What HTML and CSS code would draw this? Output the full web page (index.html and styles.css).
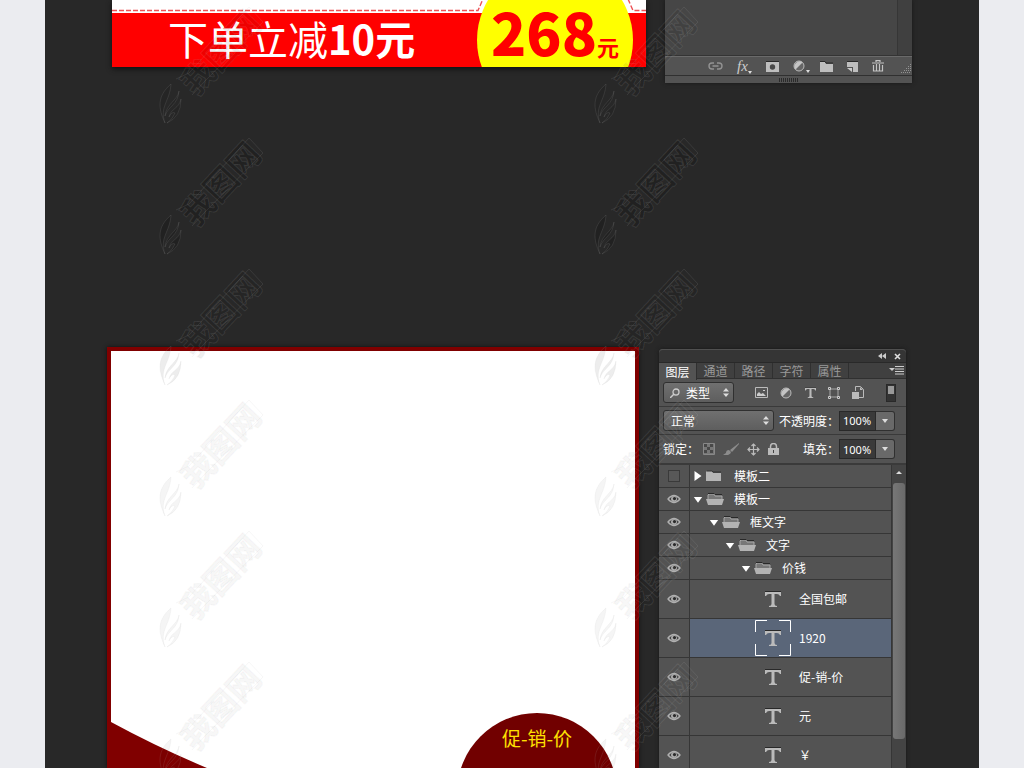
FILE: index.html
```html
<!DOCTYPE html>
<html lang="zh-CN">
<head>
<meta charset="utf-8">
<title>模板预览</title>
<link rel="stylesheet" href="styles.css">
</head>
<body>
<svg class="sprite" aria-hidden="true">
  <symbol id="eye" viewBox="0 0 14 10"><path d="M1 5Q7-2 13 5Q7 12 1 5Z" fill="#444" stroke="#b0b0b0" stroke-width="1.3"/><circle cx="7" cy="5" r="3" fill="#aaa"/><circle cx="7.5" cy="4.6" r="1.6" fill="#2b2b2b"/></symbol>
  <symbol id="folder" viewBox="0 0 15 12"><path d="M0 11V2l1-1h5l1 2h8v8Z" fill="#b5b5b5"/><path d="M1 1h5l1 1h8" stroke="#333" fill="none"/></symbol>
  <symbol id="open" viewBox="0 0 18 12"><path d="M2 6V2l1-1h5l1 2h7v3" fill="#777" stroke="#aaa"/><path d="M2 .5h6l1 1h7" stroke="#292929" fill="none"/><path d="M0 6h18l-2 6H2Z" fill="#b3b3b3"/></symbol>
  <symbol id="type" viewBox="0 0 16 16"><path d="M0 1h16v4h-1q-1-2-3-2H9.500v10q0 2 2.500 2v1H4v-1q2.500 0 2.500-2V3H4Q2 3 1 5H0Z" fill="#bbb"/><path d="M0 .5h16" stroke="#292929"/></symbol>
  <symbol id="half" viewBox="0 0 12 12"><circle cx="6" cy="6" r="5" fill="#666" stroke="#bbb"/><path d="M2.500 9.500A5 5 0 0 1 9.500 2.500Z" fill="#c4c4c4"/></symbol>
  <symbol id="updown" viewBox="0 0 6 9"><path d="M0 3.500 3 0l3 3.500ZM0 5.500h6L3 9Z" fill="#ddd"/></symbol>
  <symbol id="down" viewBox="0 0 12 8"><path d="M1 1h10L6 8Z" fill="#fff"/></symbol>
  <symbol id="right" viewBox="0 0 7 12"><path d="M0 1v10l7-5Z" fill="#fff"/></symbol>
  <symbol id="small-down" viewBox="0 0 6 4"><path d="M0 0h6L3 4Z" fill="#ddd"/></symbol>
  <symbol id="mark" viewBox="0 0 105 118">
    <path d="M12 77C-2 89-1 101 6 116C0 100 11 94 12 77ZM20 84C19 93 7 97 6 109C9 99 19 98 20 84ZM22 92C20 102 12 101 10 110Q13 104 16 106Q14 112 8 116Q22 110 22 92Z"/>
    <path d="M17 72 30 66 90 0 104 15 46 74 33 88" fill="none"/>
    <text x="62" y="58" text-anchor="middle" transform="rotate(-47 62 46)">我图网</text>
  </symbol>
</svg>

<main class="canvas">
  <section class="scene scene-top">
    <article class="banner">
      <svg class="dashes" viewBox="0 0 534 13" preserveAspectRatio="xMaxYMin slice" aria-hidden="true"><path d="M0 10.500H366L371-1M516-1 521 10.500H534" /></svg>
      <div class="offer"><span>下单立减<b>10元</b></span></div>
      <div class="price"><b>268</b><small>元</small></div>
    </article>
    <aside class="dock">
      <div class="dock-list"><span class="dock-track"></span></div>
      <div class="dock-tools">
        <button aria-label="链接图层"><svg width="15" height="8" viewBox="0 0 15 8"><path d="M6 1H4a3 3 0 0 0 0 6h2M9 1h2a3 3 0 0 1 0 6H9M4.500 4h6" fill="none" stroke="#929292" stroke-width="1.400"/></svg></button>
        <button class="fx" aria-label="图层样式"><i>fx</i><svg width="4" height="3"><path d="M0 0h4L2 3Z" fill="#ddd"/></svg></button>
        <button aria-label="添加蒙版"><svg width="13" height="11"><path d="M0 0h13v11H0Z" fill="#bebebe"/><path d="M0 .5h13" stroke="#292929"/><circle cx="6.500" cy="6" r="2.700" fill="#494949"/></svg></button>
        <button aria-label="调整图层"><svg width="17" height="13"><use href="#half" width="12" height="12"/><path d="M13 10h4l-2 3Z" fill="#ddd"/></svg></button>
        <button class="group" aria-label="新建组"><svg width="13" height="11" viewBox="0 0 13 11"><path d="M0 11V1h5l1 2h7v8Z" fill="#bebebe"/><path d="M0 .5h5l1 1.500h7" stroke="#292929" fill="none"/></svg></button>
        <button aria-label="新建图层"><svg width="11" height="11"><path d="M0 1h11v10H6V6H0Z" fill="#bebebe"/><path d="M0 .5h11" stroke="#292929"/><path d="M0 7h5v4Z" fill="#ccc"/></svg></button>
        <button aria-label="删除图层"><svg width="12" height="12"><path d="M4 2V.7h4V2M0 3h12M1.500 5v6h9V5M4.500 4v7M7.500 4v7" fill="none" stroke="#c4c4c4" stroke-width="1.200"/></svg></button>
        <svg class="resize" width="10" height="10"><path d="M0 9.500h10M3 7.500h7M5 5.500h5M7 3.500h3M9 1.500h1" stroke="#929292" stroke-dasharray="1 1"/></svg>
      </div>
      <div class="dock-grip"><span></span></div>
    </aside>
  </section>

  <section class="scene scene-main">
    <article class="card">
      <svg class="swoosh" viewBox="0 0 96 46" aria-hidden="true"><path d="M0 0Q46 25 96 46H0Z"/></svg>
      <div class="seal">促-销-价</div>
    </article>
    <aside class="panel">
      <header class="titlebar">
        <button aria-label="折叠"><svg width="8" height="6"><path d="M4 0v6L0 3ZM8 0v6L4 3Z" fill="#ccc"/></svg></button>
        <button aria-label="关闭"><svg width="7" height="7"><path d="m1 1 5 5m0-5L1 6" stroke="#ddd" stroke-width="1.600"/></svg></button>
      </header>
      <nav class="tabs">
        <button class="on">图层</button><button>通道</button><button>路径</button><button>字符</button><button>属性</button>
        <button class="menu" aria-label="菜单"><svg width="15" height="9"><path d="M0 2h6L3 5Z" fill="#ccc"/><path d="M6 .5h9M6 3h9M6 5.500h9M6 8h9" stroke="#ccc"/></svg></button>
      </nav>
      <div class="bar filter">
        <label class="pick kind"><svg class="lens" width="10" height="10"><circle cx="6" cy="4" r="3" fill="none" stroke="#ccc" stroke-width="1.300"/><path d="M4 6 0 10" stroke="#ccc" stroke-width="1.500"/></svg><select aria-label="滤镜类型"><option>类型</option></select><svg class="spin"><use href="#updown"/></svg></label>
        <div class="filter-icons">
          <button aria-label="像素"><svg width="13" height="11"><path d="M.5.5h12v10H.5Z" fill="#555" stroke="#bbb"/><path d="M2 9V7l2-2 2 2 2-1 3 3Z" fill="#ccc"/><path d="M8 3h2v1H8Z" fill="#ccc"/></svg></button>
          <button aria-label="调整"><svg width="12" height="12"><use href="#half"/></svg></button>
          <button aria-label="文字"><svg width="11" height="11"><use href="#type"/></svg></button>
          <button aria-label="形状"><svg width="12" height="12"><path d="M2 2h8v8H2Z" fill="none" stroke="#aaa"/><path d="M.5.5h2v2h-2ZM9.500.5h2v2h-2ZM.5 9.500h2v2h-2ZM9.500 9.500h2v2h-2Z" fill="#555" stroke="#ccc"/></svg></button>
          <button aria-label="智能对象"><svg width="12" height="13"><path d="M3.500 5V.5h5l3 3v8H7" fill="none" stroke="#bbb"/><path d="M8 1v3h3M0 6h7v7H0Z" fill="#bbb"/></svg></button>
        </div>
        <button class="toggle" aria-label="滤镜开关"><span></span></button>
      </div>
      <div class="bar">
        <label class="pick mode"><select aria-label="混合模式"><option>正常</option></select><svg class="spin"><use href="#updown"/></svg></label>
        <label class="amount">不透明度：<input value="100%"></label><button class="drop" aria-label="不透明度滑块"><svg width="6" height="4"><use href="#small-down"/></svg></button>
      </div>
      <div class="bar locks">
        <span>锁定：</span>
        <button aria-label="锁定透明像素"><svg width="12" height="12"><path d="M.5.5h11v11H.5Z" fill="#777" stroke="#888"/><path d="M1 1h3v3H1ZM7 1h3v3H7ZM4 4h3v3H4ZM1 7h3v3H1ZM7 7h3v3H7Z" fill="#484848"/></svg></button>
        <button aria-label="锁定图像像素"><svg width="16" height="12"><path d="M16 0 7 7l2 2 7-8ZM6 7q-3 0-3 3L0 12h5q3-1 3-3Z" fill="#8c8c8c"/></svg></button>
        <button aria-label="锁定位置"><svg width="13" height="13"><path d="M6.500 1v11M1 6.500h11M4.500 3l2-2 2 2M4.500 10l2 2 2-2M3 4.500l-2 2 2 2M10 4.500l2 2-2 2" fill="none" stroke="#bbb" stroke-width="1.200"/></svg></button>
        <button aria-label="锁定全部"><svg width="11" height="12"><path d="M2.500 6V3.500q0-3 3-3t3 3V6" fill="none" stroke="#bbb" stroke-width="1.500"/><path d="M0 5h11v7H0Z" fill="#bbb"/><path d="M5 7h1v3H5Z" fill="#444"/></svg></button>
        <label class="amount">填充：<input value="100%"></label><button class="drop" aria-label="填充滑块"><svg width="6" height="4"><use href="#small-down"/></svg></button>
      </div>
      <div class="layers">
        <ul>
          <li><button class="vis" aria-label="显示"><span class="empty"></span></button><div class="name"><svg class="arrow" width="7" height="12"><use href="#right"/></svg><svg width="15" height="12"><use href="#folder"/></svg><span>模板二</span></div></li>
          <li><button class="vis" aria-label="隐藏"><svg width="14" height="10"><use href="#eye"/></svg></button><div class="name"><svg class="arrow" width="10" height="7"><use href="#down"/></svg><svg width="18" height="12"><use href="#open"/></svg><span>模板一</span></div></li>
          <li><button class="vis" aria-label="隐藏"><svg width="14" height="10"><use href="#eye"/></svg></button><div class="name in1"><svg class="arrow" width="10" height="7"><use href="#down"/></svg><svg width="18" height="12"><use href="#open"/></svg><span>框文字</span></div></li>
          <li><button class="vis" aria-label="隐藏"><svg width="14" height="10"><use href="#eye"/></svg></button><div class="name in2"><svg class="arrow" width="10" height="7"><use href="#down"/></svg><svg width="18" height="12"><use href="#open"/></svg><span>文字</span></div></li>
          <li><button class="vis" aria-label="隐藏"><svg width="14" height="10"><use href="#eye"/></svg></button><div class="name in3"><svg class="arrow" width="10" height="7"><use href="#down"/></svg><svg width="18" height="12"><use href="#open"/></svg><span>价钱</span></div></li>
          <li class="text"><button class="vis" aria-label="隐藏"><svg width="14" height="10"><use href="#eye"/></svg></button><div class="name"><i class="thumb"><svg width="16" height="16"><use href="#type"/></svg></i><span>全国包邮</span></div></li>
          <li class="text selected"><button class="vis" aria-label="隐藏"><svg width="14" height="10"><use href="#eye"/></svg></button><div class="name"><i class="thumb"><svg width="36" height="36"><path d="M.5 12V.5H12M24 .5h11.500V12M35.500 24v11.500H24M12 35.500H.5V24" fill="none" stroke="#fff"/><use href="#type" x="10" y="10" width="16" height="16"/></svg></i><span>1920</span></div></li>
          <li class="text"><button class="vis" aria-label="隐藏"><svg width="14" height="10"><use href="#eye"/></svg></button><div class="name"><i class="thumb"><svg width="16" height="16"><use href="#type"/></svg></i><span>促-销-价</span></div></li>
          <li class="text"><button class="vis" aria-label="隐藏"><svg width="14" height="10"><use href="#eye"/></svg></button><div class="name"><i class="thumb"><svg width="16" height="16"><use href="#type"/></svg></i><span>元</span></div></li>
          <li class="text"><button class="vis" aria-label="隐藏"><svg width="14" height="10"><use href="#eye"/></svg></button><div class="name"><i class="thumb"><svg width="16" height="16"><use href="#type"/></svg></i><span>￥</span></div></li>
        </ul>
        <div class="scroll"><svg width="6" height="3"><path d="M0 3h6L3 0Z" fill="#ddd"/></svg><span></span></div>
      </div>
    </aside>
  </section>

  <div class="marks" aria-hidden="true">
    <svg class="edge"><use href="#mark"/></svg><svg class="edge"><use href="#mark"/></svg>
    <svg class="dark"><use href="#mark"/></svg><svg class="dark"><use href="#mark"/></svg>
    <svg class="edge"><use href="#mark"/></svg><svg class="edge"><use href="#mark"/></svg>
    <svg><use href="#mark"/></svg><svg><use href="#mark"/></svg>
    <svg><use href="#mark"/></svg><svg><use href="#mark"/></svg>
    <svg><use href="#mark"/></svg><svg><use href="#mark"/></svg>
  </div>
</main>
</body>
</html>
```
FILE: styles.css
```css
* { box-sizing: border-box; }
body { margin: 0; background: #ebecf0; font-family: "Noto Sans CJK SC", sans-serif; }
svg { display: block; flex: none; }
button { display: flex; align-items: center; justify-content: center; padding: 0; border: 0; background: none; color: inherit; font: inherit; }
.sprite { position: absolute; width: 0; height: 0; }
.canvas { position: relative; display: flex; flex-direction: column; gap: 264px; height: 100vh; margin: 0 45px; overflow: hidden; background: #282828; }
.scene { display: grid; grid-template-columns: 1fr 247px; }
.scene-top { column-gap: 19px; padding: 0 67px; align-items: start; }
.scene-main { flex: 1; min-height: 0; grid-template-rows: minmax(0, 1fr); column-gap: 20px; padding: 0 73px 0 62px; }

/* Promotion strip */
.banner { position: relative; overflow: hidden; background: #fff; box-shadow: 0 2px 5px #111; }
.dashes { width: 100%; height: 13px; fill: none; stroke: #ee5055; stroke-width: 1.4; stroke-dasharray: 5 2; }
.offer { height: 54px; padding-left: 56px; background: #f00; color: #fff; font-size: 40px; line-height: 50px; font-weight: 400; }
.offer b { font-weight: 700; }
.price { position: absolute; right: 13px; top: -38px; display: flex; align-items: baseline; justify-content: center; width: 156px; height: 156px; border-radius: 50%; background: #ff0; color: #f00; line-height: 138px; font-weight: 700; }
.price b { font-size: 58px; }
.price small { font-size: 22px; }

/* Panel footer */
.dock { color: #ccc; background: #535353; box-shadow: 0 0 4px #181818; }
.dock-list { display: flex; justify-content: flex-end; height: 56px; background: #464646; border-bottom: 1px solid #343434; }
.dock-track { width: 15px; background: #404040; border-left: 1px solid #363636; }
.dock-tools { display: flex; align-items: center; gap: 14px; height: 20px; padding-left: 43px; border-top: 1px solid #6a6a6a; border-bottom: 1px solid #303030; }
.dock-grip { display: flex; align-items: center; justify-content: center; height: 7px; }
.dock-grip span { width: 20px; height: 4px; background: repeating-linear-gradient(90deg, #2b2b2b 0 1px, #535353 1px 2px); }
.dock-tools .group { margin-left: -4px; }
.fx { align-items: flex-end; font: 15px/16px "Liberation Serif", serif; }
.resize { margin: 4px 1px 0 auto; }

/* Artwork card */
.card { position: relative; overflow: hidden; background: #fff; border: 4px solid #800000; border-bottom: 0; box-shadow: 0 0 4px #111; }
.swoosh { position: absolute; left: 0; bottom: 0; width: 96px; height: 46px; fill: #800000; }
.seal { position: absolute; right: 18px; bottom: -105px; width: 160px; height: 160px; border-radius: 50%; background: #710000; color: #ffe000; font-size: 19px; line-height: 50px; text-align: center; }

/* Layers panel */
.panel { display: flex; flex-direction: column; min-height: 0; margin-top: 2px; border-radius: 4px 4px 0 0; background: #535353; color: #fff; font-size: 12px; line-height: 16px; box-shadow: 0 0 4px #181818; }
.titlebar { display: flex; align-items: center; justify-content: flex-end; gap: 8px; height: 13px; padding: 0 5px; border-radius: 4px 4px 0 0; background: #353535; border-top: 1px solid #505050; }
.tabs { display: flex; height: 17px; background: #404040; border-top: 1px solid #292929; border-bottom: 1px solid #303030; }
.tabs button { width: 38px; color: #999; border-right: 1px solid #303030; }
.tabs .on { height: 17px; color: #fff; background: #535353; }
.tabs .menu { width: 20px; margin-left: auto; border: 0; }
.bar { display: flex; flex: none; align-items: center; height: 28px; padding: 0 11px 0 4px; border-bottom: 1px solid #3a3a3a; }
.filter { padding-right: 10px; }
.pick { position: relative; display: flex; align-items: center; height: 21px; border: 1px solid #303030; border-radius: 3px; background: linear-gradient(#707070, #5e5e5e); }
.pick select { width: 100%; height: 19px; padding: 0 7px; appearance: none; border: 0; background: none; color: #fff; font: inherit; }
.kind { width: 71px; }
.kind select { padding-left: 22px; }
.mode { width: 111px; }
.lens { position: absolute; left: 6px; top: 5px; }
.spin { position: absolute; right: 4px; top: 5px; width: 6px; height: 9px; }
.filter-icons { display: flex; flex: 1; align-items: center; justify-content: space-between; padding: 0 22px 0 21px; }
.toggle { width: 10px; height: 18px; padding: 1px; align-items: flex-start; background: #333; border: 1px solid #292929; }
.toggle span { width: 8px; height: 8px; background: #999; }
.amount { display: flex; flex: none; align-items: center; margin-left: auto; }
.amount input { width: 37px; height: 20px; padding: 0 2px 0 3px; border: 1px solid #292929; background: #3a3a3a; color: #fff; font: 11px "Noto Sans", sans-serif; }
.drop { flex: none; width: 19px; height: 20px; border: 1px solid #303030; border-left: 0; border-radius: 0 3px 3px 0; background: #696969; }
.locks { height: 29px; gap: 8px; }
.locks > span { width: 32px; flex: none; white-space: nowrap; }
.locks .drop { margin-left: -8px; }
.layers { display: flex; flex: 1; min-height: 0; border-top: 1px solid #3a3a3a; }
.layers ul { flex: 1; margin: 0; padding: 0; list-style: none; }
.layers li { display: flex; height: 23px; border-bottom: 1px solid #363636; }
.layers li.text { height: 39px; }
.vis { width: 31px; border-right: 1px solid #363636; }
.empty { width: 12px; height: 12px; border: 1px solid #3a3a3a; background: #585858; }
.name { display: flex; flex: 1; align-items: center; padding-left: 3px; }
.name span { margin-left: auto; width: 157px; }
.name .arrow { width: 10px; margin-right: 3px; }
.in1 { padding-left: 19px; }
.in2 { padding-left: 35px; }
.in3 { padding-left: 51px; }
.in1 span { width: 141px; }
.in2 span { width: 125px; }
.in3 span { width: 109px; }
.thumb { display: flex; justify-content: center; width: 36px; margin-left: 62px; }
.text .name span { width: 92px; }
.selected .name { background: #5a6679; }
.scroll { width: 15px; padding: 6px 1px 0; border-left: 1px solid #363636; background: #444; }
.scroll svg { margin: 0 auto; }
.scroll span { display: block; height: 256px; margin-top: 9px; border-radius: 3px; background: linear-gradient(90deg, #777, #696969); }

/* Repeating watermark */
.marks { position: absolute; inset: 7px auto auto 114px; display: grid; grid-template-columns: 105px 105px; gap: 13px 330px; pointer-events: none; }
.marks svg { width: 105px; height: 118px; fill: rgb(0 0 0 / 4%); stroke: rgb(190 190 190 / 12%); font: 700 33px/1 "Noto Sans CJK SC", sans-serif; }
.marks .dark { fill: rgb(0 0 0 / 16%); }
.marks .edge { fill: rgb(0 0 0 / 7%); }
```
